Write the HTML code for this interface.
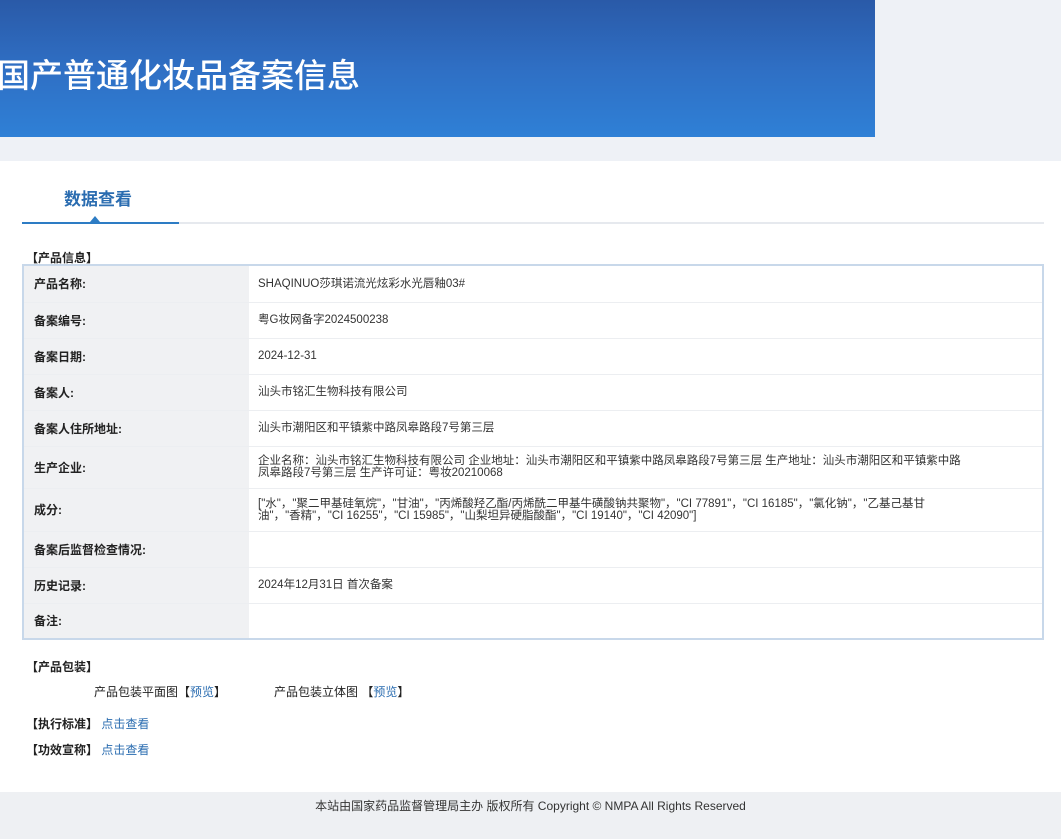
<!DOCTYPE html>
<html><head><meta charset="utf-8"><style>
*{margin:0;padding:0;box-sizing:border-box}
body{width:1061px;height:839px;background:#fff;font-family:"Liberation Sans","Noto Sans CJK SC",sans-serif;position:relative;overflow:hidden;color:#333}
.top{position:absolute;left:0;top:0;width:1061px;height:161px;background:#eef1f6}
.banner{position:absolute;left:0;top:0;width:875px;height:137px;background:linear-gradient(180deg,#2a5aa8 0%,#2f6fc4 50%,#2f80d6 100%)}
.banner h1{position:absolute;left:-3px;top:49px;font-size:33px;font-weight:500;color:#fff;letter-spacing:0}
.tab{position:absolute;left:64px;top:185px;font-size:17px;font-weight:bold;color:#2a6cb0}
.line{position:absolute;left:22px;top:222px;width:1022px;height:2px;background:#e6e9ee}
.line2{position:absolute;left:22px;top:222px;width:157px;height:2px;background:#2d7cc4}
.tri{position:absolute;left:90px;top:216px;width:0;height:0;border-left:5px solid transparent;border-right:5px solid transparent;border-bottom:6px solid #2d7cc4}
.sec{position:absolute;font-size:12px;font-weight:bold;color:#222}
table{position:absolute;left:22px;top:264px;width:1022px;border:2px solid #c8d8ea;border-collapse:collapse;font-size:11.5px}
td{border-bottom:1px solid #eceef1;vertical-align:middle}
td.k{width:226px;background:#f0f1f3;font-weight:bold;padding-left:10px;font-size:12px;color:#222}
td.v{padding-left:9px;color:#333;line-height:12px}
a{color:#2a6cb0;text-decoration:none}
.foot{position:absolute;left:0;top:792px;width:1061px;height:47px;background:#eef0f3;text-align:center;font-size:12px;line-height:28px;color:#333}
.t{position:absolute;font-size:12px;color:#222}
</style></head><body>
<div class="top"></div>
<div class="banner"><h1>国产普通化妆品备案信息</h1></div>
<div class="tab">数据查看</div>
<div class="line"></div><div class="line2"></div><div class="tri"></div>
<div class="sec" style="left:26px;top:249px">【产品信息】</div>
<table>
<tr style="height:37px"><td class="k">产品名称:</td><td class="v">SHAQINUO莎琪诺流光炫彩水光唇釉03#</td></tr>
<tr style="height:36px"><td class="k">备案编号:</td><td class="v">粤G妆网备字2024500238</td></tr>
<tr style="height:36px"><td class="k">备案日期:</td><td class="v">2024-12-31</td></tr>
<tr style="height:36px"><td class="k">备案人:</td><td class="v">汕头市铭汇生物科技有限公司</td></tr>
<tr style="height:36px"><td class="k">备案人住所地址:</td><td class="v">汕头市潮阳区和平镇紫中路凤皋路段7号第三层</td></tr>
<tr style="height:42px"><td class="k">生产企业:</td><td class="v">企业名称：汕头市铭汇生物科技有限公司 企业地址：汕头市潮阳区和平镇紫中路凤皋路段7号第三层 生产地址：汕头市潮阳区和平镇紫中路<br>凤皋路段7号第三层 生产许可证：粤妆20210068</td></tr>
<tr style="height:43px"><td class="k">成分:</td><td class="v">["水"，"聚二甲基硅氧烷"，"甘油"，"丙烯酸羟乙酯/丙烯酰二甲基牛磺酸钠共聚物"，"CI 77891"，"CI 16185"，"氯化钠"，"乙基己基甘<br>油"，"香精"，"CI 16255"，"CI 15985"，"山梨坦异硬脂酸酯"，"CI 19140"，"CI 42090"]</td></tr>
<tr style="height:36px"><td class="k">备案后监督检查情况:</td><td class="v"></td></tr>
<tr style="height:36px"><td class="k">历史记录:</td><td class="v">2024年12月31日 首次备案</td></tr>
<tr style="height:36px"><td class="k">备注:</td><td class="v"></td></tr>
</table>
<div class="sec" style="left:26px;top:658px">【产品包装】</div>
<div class="t" style="left:94px;top:683px">产品包装平面图【<a>预览</a>】</div>
<div class="t" style="left:274px;top:683px">产品包装立体图 【<a>预览</a>】</div>
<div class="sec" style="left:26px;top:715px">【执行标准】 <a style="font-weight:normal">点击查看</a></div>
<div class="sec" style="left:26px;top:741px">【功效宣称】 <a style="font-weight:normal">点击查看</a></div>
<div class="foot">本站由国家药品监督管理局主办 版权所有 Copyright © NMPA All Rights Reserved</div>
</body></html>
